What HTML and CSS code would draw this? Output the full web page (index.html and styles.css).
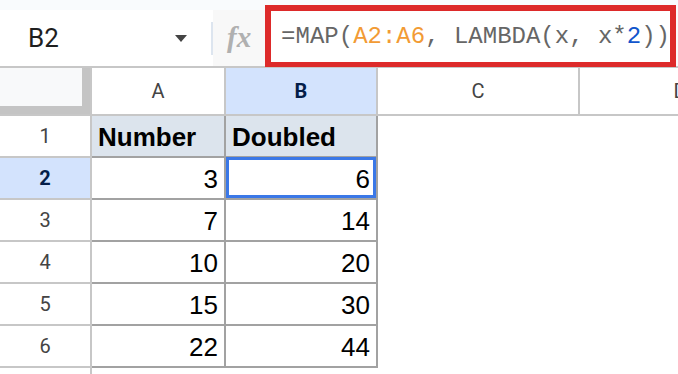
FILE: index.html
```html
<!DOCTYPE html>
<html lang="en">
<head>
  <meta charset="UTF-8" />
  <title>MAP LAMBDA</title>
  <link rel="stylesheet" href="styles.css">
</head>
<body>
  <div class="toolbar">
    <div class="namebox">
      <span class="ref">B2</span>
      <span class="caret"></span>
    </div>
    <div class="fx">fx</div>
    <div class="formula">=MAP(<span class="range">A2:A6</span>, LAMBDA(x, x*<span class="num">2</span>))</div>
  </div>

  <div class="sheet">
    <div class="corner"></div>
    <div class="colhead">A</div>
    <div class="colhead active">B</div>
    <div class="colhead">C</div>
    <div class="colhead">D</div>

    <div class="rowhead">1</div>
    <div class="cell head">Number</div>
    <div class="cell head">Doubled</div>
    <div class="blank"></div>
    <div class="blank"></div>

    <div class="rowhead active">2</div>
    <div class="cell">3</div>
    <div class="cell selected">6</div>
    <div class="blank"></div>
    <div class="blank"></div>

    <div class="rowhead">3</div>
    <div class="cell">7</div>
    <div class="cell">14</div>
    <div class="blank"></div>
    <div class="blank"></div>

    <div class="rowhead">4</div>
    <div class="cell">10</div>
    <div class="cell">20</div>
    <div class="blank"></div>
    <div class="blank"></div>

    <div class="rowhead">5</div>
    <div class="cell">15</div>
    <div class="cell">30</div>
    <div class="blank"></div>
    <div class="blank"></div>

    <div class="rowhead">6</div>
    <div class="cell">22</div>
    <div class="cell">44</div>
    <div class="blank"></div>
    <div class="blank"></div>

    <div class="rowhead last"></div>
    <div class="blank"></div>
    <div class="blank"></div>
    <div class="blank"></div>
    <div class="blank"></div>
  </div>
</body>
</html>
```

FILE: styles.css
```css
:root {
  --grid-light: #c7c7c7;
  --grid-data: #a2a2a2;
  --select-blue: #3b78e7;
  --active-bg: #d3e3fd;
  --active-text: #041e49;
  --head-bg: #dce4ed;
}

* {
  box-sizing: border-box;
}

body {
  margin: 0;
  width: 678px;
  height: 374px;
  overflow: hidden;
  background: white;
  font-family: Roboto, 'Liberation Sans', sans-serif;
}

/* formula toolbar */
.toolbar {
  display: flex;
  height: 66px;
  padding-top: 10px;
  background: #f9fbfd;
  position: relative;
  z-index: 2;
}

.namebox {
  width: 214px;
  background: white;
  display: flex;
  align-items: center;
  padding-left: 28px;
  position: relative;
}

.namebox::after {
  content: "";
  position: absolute;
  right: 0;
  top: 12px;
  bottom: 11px;
  width: 2px;
  background: #dde5ef;
}

.ref {
  flex: 1;
  font-size: 26px;
  color: #1f1f1f;
}

.caret {
  width: 0;
  height: 0;
  border-left: 6px solid transparent;
  border-right: 6px solid transparent;
  border-top: 7px solid #444;
  margin-right: 26px;
}

.fx {
  width: 52px;
  background: #f8f8f8;
  display: flex;
  justify-content: center;
  align-items: center;
  font-family: 'Liberation Serif', serif;
  font-style: italic;
  font-weight: bold;
  font-size: 29px;
  color: #b0b0b0;
  padding-bottom: 2px;
}

.formula {
  flex: 1;
  margin: -5px 2px -1px 0;
  border: 6px solid #dd2a2a;
  border-bottom-width: 5px;
  background: white;
  display: flex;
  align-items: center;
  padding-left: 10px;
  font-family: 'Liberation Mono', monospace;
  font-size: 24px;
  color: #666;
  white-space: nowrap;
}

.range {
  color: #f29b34;
}

.num {
  color: #1155cc;
}

/* grid */
.sheet {
  display: grid;
  grid-template-columns: 92px 134px 152px 202px 202px;
  grid-template-rows: 50px;
  grid-auto-rows: 42px;
}

.corner {
  border-top: 2px solid var(--grid-light);
  border-right: 2px solid var(--grid-light);
  border-bottom: 2px solid var(--grid-light);
  background: #c4c4c4;
  position: relative;
}

.corner::before {
  content: "";
  position: absolute;
  left: 0;
  top: 0;
  width: 82px;
  height: 38px;
  background: #f8f9fa;
}

.colhead {
  border-top: 2px solid var(--grid-light);
  border-right: 2px solid var(--grid-light);
  border-bottom: 2px solid var(--grid-light);
  display: flex;
  justify-content: center;
  align-items: center;
  font-size: 20px;
  color: #444;
}

.rowhead {
  border-right: 2px solid var(--grid-light);
  border-bottom: 2px solid var(--grid-light);
  display: flex;
  justify-content: center;
  align-items: center;
  font-size: 20px;
  color: #444;
}

.rowhead.last {
  border-bottom: none;
}

.colhead.active,
.rowhead.active {
  background: var(--active-bg);
  color: var(--active-text);
  font-weight: bold;
}

.cell {
  border-right: 2px solid var(--grid-data);
  border-bottom: 2px solid var(--grid-data);
  display: flex;
  justify-content: flex-end;
  align-items: flex-end;
  padding: 0 6px 4px;
  font-family: 'Liberation Sans', Arial, sans-serif;
  font-size: 26px;
  line-height: 30px;
  color: #000;
}

.cell.head {
  justify-content: flex-start;
  background: var(--head-bg);
  font-weight: bold;
}

.cell.selected {
  position: relative;
}

.cell.selected::after {
  content: "";
  position: absolute;
  left: 0;
  right: 0;
  top: -1px;
  bottom: 0;
  border: 3px solid var(--select-blue);
}
```
